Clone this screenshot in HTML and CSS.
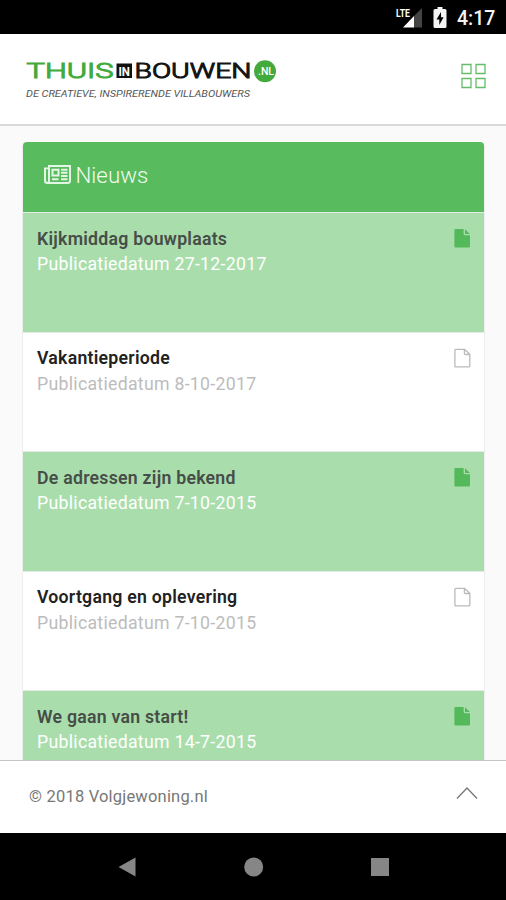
FILE: index.html
```html
<!DOCTYPE html>
<html lang="nl">
<head>
<meta charset="utf-8">
<title>Nieuws</title>
<link rel="stylesheet" href="styles.css">
</head>
<body>
<svg class="defs" width="0" height="0">
  <symbol id="file-full" viewBox="0 0 17 20"><path d="M1.4 1H9.6V5.600Q9.600 7.200 11 7.200H16V18.400Q16 19.400 15 19.400H1.400Q.4 19.400 .4 18.400V2Q.4 1 1.400 1Z"/><path d="M11 1.300L15.900 5.900H11Z"/></symbol>
  <symbol id="file-line" viewBox="0 0 17 20"><path d="M1.800 1.400H10.600L15.800 6.200V18Q15.800 18.900 14.900 18.900H1.800Q.9 18.900 .9 18V2.300Q.9 1.400 1.800 1.400ZM10.400 1.600V5.400Q10.400 6.500 11.400 6.500H15.600" fill="none" stroke="currentColor" stroke-width="1.300"/></symbol>
</svg>
<div class="status">
  <svg class="signal" width="27" height="22" viewBox="0 0 27 22">
    <path d="M26 1V20.500H18V9Z" fill="#444"/>
    <path d="M18 9V20.500H7Z" fill="#fff"/>
    <text x="0" y="9.500" class="lte" textLength="14" lengthAdjust="spacingAndGlyphs">LTE</text>
  </svg>
  <svg class="battery" width="14" height="22" viewBox="0 0 14 22"><path d="M4.500 0h5v2H12q1.500 0 1.500 1.500v16Q13.500 21 12 21H2Q.5 21 .5 19.500V3.500Q.5 2 2 2h2.500Z" fill="#f4f4f4"/><path d="M8 5L3.500 12.500H6.300V18L10.600 10.300H8Z" fill="#000"/></svg>
  <span class="time">4:17</span>
</div>
<header class="top">
  <svg class="logo" width="260" height="46" viewBox="0 0 260 46">
    <text x="2.500" y="22.500" class="word green" textLength="87" lengthAdjust="spacingAndGlyphs">THUIS</text>
    <rect x="92.500" y="8.500" width="15.500" height="14.500" fill="#111"/>
    <text x="94.500" y="20.500" class="in" textLength="11.500" lengthAdjust="spacingAndGlyphs">IN</text>
    <text x="110.500" y="22.500" class="word" textLength="117" lengthAdjust="spacingAndGlyphs">BOUWEN</text>
    <circle cx="241" cy="16.300" r="11" fill="#43aa3e"/>
    <text x="234" y="19.800" class="nl" textLength="16" lengthAdjust="spacingAndGlyphs">.NL</text>
    <text x="2" y="41.500" class="tagline" textLength="224" lengthAdjust="spacingAndGlyphs">DE CREATIEVE, INSPIRERENDE VILLABOUWERS</text>
  </svg>
  <svg class="grid" width="26" height="26" viewBox="0 0 26 26" fill="none" stroke="#64bd68" stroke-width="1.300"><path d="M1 1.500H10V10.500H1ZM15 1.500H24V10.500H15ZM1 15.500H10V24.500H1ZM15 15.500H24V24.500H15Z"/></svg>
</header>
<main class="content">
  <section class="panel">
    <h1 class="heading">
      <svg width="27" height="19" viewBox="0 0 27 20" preserveAspectRatio="none" fill="none" stroke="#e3f6e5" stroke-width="2"><path d="M5 3V1H26V16.500Q26 19 23.500 19H3.500Q1 19 1 16.500V3.500H5V16.500Q5 19 3 19"/><path d="M8.500 5H14.500V11H8.500ZM17 5H23.500M17 8.200H23.500M17 11.500H23.500M8 15H14.500M17 15H23.500"/></svg>
      <span>Nieuws</span>
    </h1>
    <article class="row on"><div><h2>Kijkmiddag bouwplaats</h2><p>Publicatiedatum 27-12-2017</p></div><svg class="file"><use href="#file-full"/></svg></article>
    <article class="row"><div><h2>Vakantieperiode</h2><p>Publicatiedatum 8-10-2017</p></div><svg class="file"><use href="#file-line"/></svg></article>
    <article class="row on"><div><h2>De adressen zijn bekend</h2><p>Publicatiedatum 7-10-2015</p></div><svg class="file"><use href="#file-full"/></svg></article>
    <article class="row"><div><h2>Voortgang en oplevering</h2><p>Publicatiedatum 7-10-2015</p></div><svg class="file"><use href="#file-line"/></svg></article>
    <article class="row on"><div><h2>We gaan van start!</h2><p>Publicatiedatum 14-7-2015</p></div><svg class="file"><use href="#file-full"/></svg></article>
  </section>
</main>
<footer class="foot">
  <span>© 2018 Volgjewoning.nl</span>
  <svg width="22" height="17" viewBox="0 0 22 17" fill="none" stroke="#777" stroke-width="1.300"><path d="M1 11.500L11 1L21 11.500"/></svg>
</footer>
<nav class="nav">
  <svg width="18" height="20" viewBox="0 0 18 20"><path d="M17.500 0.500V19.500L0.500 10Z"/></svg>
  <svg width="20" height="20" viewBox="0 0 20 20"><circle cx="9.700" cy="10" r="9.500"/></svg>
  <svg width="18" height="18" viewBox="0 0 18 18"><path d="M0 0H18V18H0Z"/></svg>
</nav>
</body>
</html>
```
FILE: styles.css
```css
* { box-sizing: border-box; }
body {
  margin: 0;
  width: 506px;
  height: 900px;
  overflow: hidden;
  display: flex;
  flex-direction: column;
  font-family: Roboto, "Liberation Sans", sans-serif;
  background: #fafafa;
}
h1, h2, p { margin: 0; }
svg { display: block; flex: none; }
.defs { display: none; }
.status {
  height: 34px;
  flex: none;
  background: #000;
  display: flex;
  justify-content: flex-end;
  padding: 7px 10px 0 0;
}
.battery { margin: 0 10px 0 10px; }
.time {
  color: #f4f4f4;
  font-size: 19.5px;
  font-weight: 500;
  line-height: 24px;
  width: 39px;
  white-space: nowrap;
}
.lte { font: bold 11px Roboto, sans-serif; fill: #fff; }
.top {
  height: 92px;
  flex: none;
  background: #fff;
  border-bottom: 2px solid #d9d9d9;
  display: flex;
  justify-content: space-between;
  padding: 21px 19px 0 24px;
}
.grid { margin-top: 8px; }
.word {
  font: 300 20px Roboto, sans-serif;
  fill: #151515;
  stroke: #151515;
  stroke-width: 1px;
}
.green { fill: #43aa3e; stroke: #43aa3e; }
.in { font: bold 13px Roboto, sans-serif; fill: #fff; }
.nl { font: 500 10px Roboto, sans-serif; fill: #fff; }
.tagline { font: italic 9.5px Roboto, sans-serif; fill: #555; }
.content {
  flex: 1;
  min-height: 0;
  overflow: hidden;
  padding: 16px 21px 0 22px;
}
.panel { border: 1px solid #ededed; border-top: 0; border-radius: 4px 4px 0 0; background: #fff; }
.heading {
  height: 70px;
  background: #58bb5e;
  border-radius: 4px 4px 0 0;
  color: #f0fbf1;
  display: flex;
  align-items: center;
  gap: 4.5px;
  padding: 0 0 5px 21px;
  font-size: 22.3px;
  font-weight: 300;
}
.heading span { padding-top: 1px; }
.row {
  height: 119.6px;
  border-top: 1px solid #e4ebe4;
  display: flex;
  justify-content: space-between;
  padding: 13.7px 13px 0 14px;
  color: #bcbcbc;
}
.row h2 { font-size: 17.7px; line-height: 25.3px; font-weight: 600; letter-spacing: .25px; color: #222; }
.row p { font-size: 17.7px; line-height: 25.3px; letter-spacing: .29px; }
.row.on { background: #a9deac; color: #fff; }
.row.on h2 { color: #474d48; }
.file { width: 17px; height: 20px; margin-top: 1.3px; fill: #53b95a; color: #bababa; }
.foot {
  height: 73px;
  flex: none;
  background: #fff;
  border-top: 1px solid #c4c4c4;
  display: flex;
  align-items: center;
  justify-content: space-between;
  padding: 0 28px 4px 29px;
  font-size: 16.5px;
  letter-spacing: .2px;
  color: #777;
}
.foot span { padding-top: 2px; }
.nav {
  height: 67px;
  flex: none;
  background: #000;
  fill: #868686;
  display: flex;
  justify-content: space-between;
  align-items: center;
  padding: 0 117px 0 118px;
}
```
